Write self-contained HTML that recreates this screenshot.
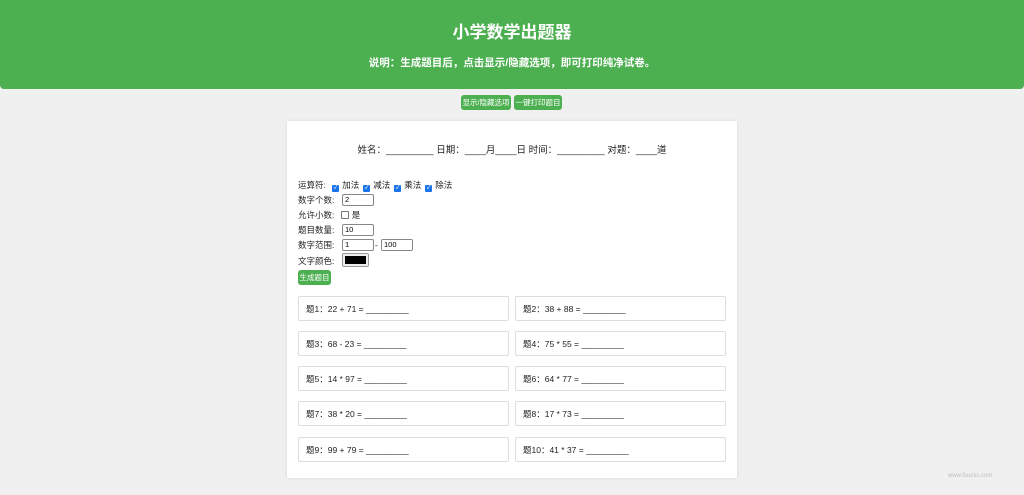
<!DOCTYPE html>
<html><head><meta charset="utf-8"><style>
body{margin:0;background:#f0f0f0;font-family:"Liberation Sans","Noto Sans CJK SC",sans-serif;width:1024px;height:495px;overflow:hidden;position:relative}
.hd{position:absolute;left:0;top:0;width:1024px;height:89px;background:#4caf50;color:#fff;text-align:center;border-radius:0 0 4px 4px}
.hd h1{position:absolute;top:21px;left:0;right:0;margin:0;font-size:17px;font-weight:bold;line-height:24px}
.hd p{position:absolute;top:56px;left:0;right:0;margin:0;font-size:10.5px;font-weight:bold;line-height:14px}
.btn{position:absolute;background:#4caf50;color:#fff;font-size:7.5px;border-radius:3px;line-height:15px;height:15px;text-align:center}
.card{position:absolute;left:287px;top:121px;width:450px;height:357px;background:#fff;box-shadow:0 0 3px rgba(0,0,0,.1)}
.t{position:absolute;font-size:8.5px;color:#222;line-height:11px;white-space:nowrap}
.cb{display:inline-block;width:7px;height:7px;background:#1a73e8;border-radius:1px;vertical-align:-1px;margin:0 3px 0 4px;color:#fff;font-size:6px;line-height:7px;text-align:center}
.in{position:absolute;height:10px;border:1px solid #888;border-radius:2px;font-size:7.5px;line-height:10px;padding-left:2px;box-sizing:content-box}
.q{position:absolute;width:211px;height:25px;border:1px solid #ddd;border-radius:2px;font-size:8.5px;line-height:24px;padding-left:7px;box-sizing:border-box;color:#222}
</style></head><body>
<div class="hd"><h1>小学数学出题器</h1><p>说明：生成题目后，点击显示/隐藏选项，即可打印纯净试卷。</p></div>
<div class="btn" style="left:461px;top:95px;width:50px">显示/隐藏选项</div>
<div class="btn" style="left:514px;top:95px;width:48px">一键打印题目</div>
<div class="card">
<div class="t" style="left:0;right:0;top:24px;text-align:center;font-size:9.5px">姓名：_________ 日期：____月____日 时间：_________ 对题：____道</div>
<div class="t" style="left:11px;top:59px">运算符: <span class="cb">✓</span>加法<span class="cb">✓</span>减法<span class="cb">✓</span>乘法<span class="cb">✓</span>除法</div>
<div class="t" style="left:11px;top:74px">数字个数:</div><div class="in" style="left:55px;top:73px;width:28px">2</div>
<div class="t" style="left:11px;top:89px">允许小数: <span style="display:inline-block;width:6px;height:6px;border:1px solid #777;border-radius:1px;margin:0 3px 0 4px;vertical-align:-1px"></span>是</div>
<div class="t" style="left:11px;top:104px">题目数量:</div><div class="in" style="left:55px;top:103px;width:28px">10</div>
<div class="t" style="left:11px;top:119px">数字范围:</div><div class="in" style="left:55px;top:118px;width:28px">1</div><div class="t" style="left:88px;top:119px">-</div><div class="in" style="left:94px;top:118px;width:28px">100</div>
<div class="t" style="left:11px;top:135px">文字颜色:</div><div style="position:absolute;left:55px;top:132px;width:25px;height:12px;border:1px solid #999;background:#eee;border-radius:2px"><div style="margin:2px;height:8px;background:#000"></div></div>
<div class="btn" style="left:11px;top:149px;width:33px">生成题目</div>
<div class="q" style="left:11px;top:175px">题1：22 + 71 = _________</div>
<div class="q" style="left:228px;top:175px">题2：38 + 88 = _________</div>
<div class="q" style="left:11px;top:210px">题3：68 - 23 = _________</div>
<div class="q" style="left:228px;top:210px">题4：75 * 55 = _________</div>
<div class="q" style="left:11px;top:245px">题5：14 * 97 = _________</div>
<div class="q" style="left:228px;top:245px">题6：64 * 77 = _________</div>
<div class="q" style="left:11px;top:280px">题7：38 * 20 = _________</div>
<div class="q" style="left:228px;top:280px">题8：17 * 73 = _________</div>
<div class="q" style="left:11px;top:316px">题9：99 + 79 = _________</div>
<div class="q" style="left:228px;top:316px">题10：41 * 37 = _________</div>
</div>
<div class="t" style="left:948px;top:471px;font-size:6px;color:#bbb">www.fsucss.com</div>
</body></html>
